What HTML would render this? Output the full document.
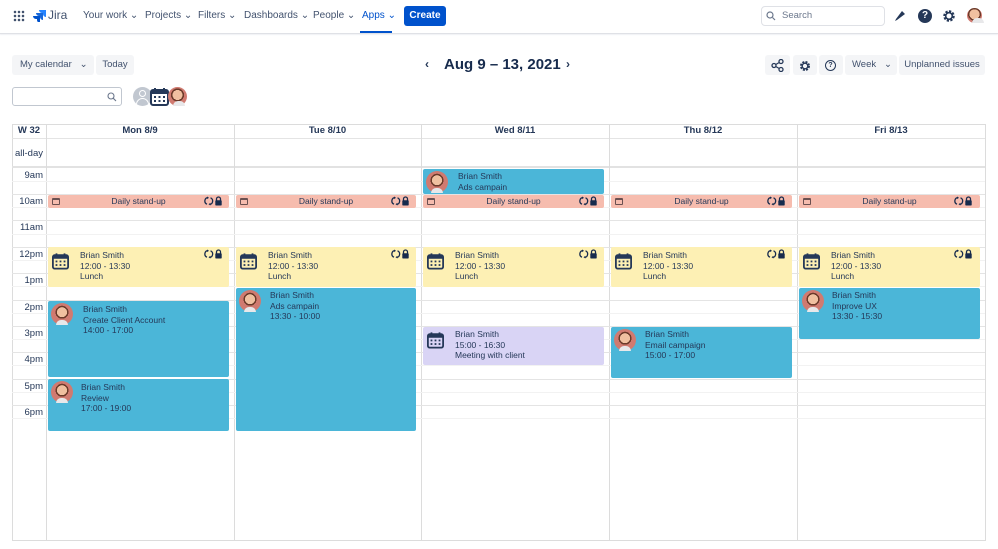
<!DOCTYPE html>
<html><head><meta charset="utf-8"><style>
*{box-sizing:border-box;margin:0;padding:0}
body{width:998px;height:549px;overflow:hidden;background:#fff;font-family:"Liberation Sans",sans-serif;color:#253858;position:relative}
.a{position:absolute}
.nav{font-size:10px;color:#42526e;top:10px}
.btn{position:absolute;background:#f4f5f7;border-radius:3px;font-size:9.5px;color:#42526e;height:20px;line-height:20px;text-align:center}
.hl{position:absolute;left:12px;width:973px;height:1px;background:#e4e4e4}
.hh{position:absolute;left:12px;width:973px;height:1px;background:#f2f2f2}
.vl{position:absolute;top:124px;height:417px;width:1px;background:#dcdcdc}
.tl{position:absolute;left:12px;width:31px;text-align:right;font-size:9.5px;color:#253858}
.ev{position:absolute;border-radius:2px;font-size:8.5px;color:#253858;line-height:10.5px}
.blue{background:#4bb6d8}.yel{background:#fdf0b4}.pink{background:#f6bcae}.lav{background:#d9d4f5}
.av{position:absolute;width:22px;height:22px;border-radius:50%;background:radial-gradient(circle at 50% 42%,#f0c0a0 0 5px,#6b3a2a 5px 6.5px,#d07a70 6.5px);}
.av::after{content:"";position:absolute;left:5px;bottom:0;width:12px;height:5px;border-radius:6px 6px 0 0;background:#e8e8ea}
.ic{position:absolute}
.dh{position:absolute;top:124px;font-size:9.5px;font-weight:bold;text-align:center;line-height:14px}
.sl{position:absolute;width:20px;height:10px}
</style></head><body>
<!-- top nav -->
<div class="a" style="left:13px;top:10px;width:12px;height:12px;background:
radial-gradient(circle,#42526e 1.2px,transparent 1.4px) 0 0/4px 4px"></div>
<svg class="a" style="left:33px;top:9px" width="13" height="13" viewBox="0 0 13 13"><path d="M12 1H6a3 3 0 0 0 3 3h1v1a3 3 0 0 0 3 3V1z" fill="#2684ff"/><path d="M9 4H3a3 3 0 0 0 3 3h1v1a3 3 0 0 0 3 3V4z" fill="#1868db"/><path d="M6 7H0a3 3 0 0 0 3 3h1v1a3 3 0 0 0 3 3V7z" fill="#0052cc"/></svg>
<div class="a" style="left:48px;top:8px;font-size:12px;color:#42526e">Jira</div>
<div class="a nav" style="left:83px">Your work ⌄</div>
<div class="a nav" style="left:145px">Projects ⌄</div>
<div class="a nav" style="left:198px">Filters ⌄</div>
<div class="a nav" style="left:244px">Dashboards ⌄</div>
<div class="a nav" style="left:313px">People ⌄</div>
<div class="a nav" style="left:362px;color:#0052cc">Apps ⌄</div>
<div class="a" style="left:360px;top:31px;width:32px;height:2px;background:#0052cc"></div>
<div class="a" style="left:404px;top:6px;width:42px;height:20px;background:#0052cc;border-radius:3px;color:#fff;font-size:10px;font-weight:bold;text-align:center;line-height:20px">Create</div>
<div class="a" style="left:761px;top:6px;width:124px;height:20px;border:1px solid #dfe1e6;border-radius:4px;font-size:9.5px;color:#6b778c;line-height:18px;padding-left:20px">Search</div>
<svg class="a" style="left:766px;top:11px" width="10" height="10"><circle cx="4" cy="4" r="3" stroke="#6b778c" fill="none" stroke-width="1.2"/><path d="M6.5 6.5L9 9" stroke="#6b778c" stroke-width="1.2"/></svg>
<svg class="a" style="left:893px;top:9px" width="14" height="14" viewBox="0 0 14 14"><path d="M3 10L9 2l3 3-8 6zM3 10l-1 2 2-1" fill="#253858"/></svg>
<div class="a" style="left:918px;top:9px;width:14px;height:14px;border-radius:50%;background:#253858;color:#fff;font-size:10px;font-weight:bold;text-align:center;line-height:14px">?</div>
<svg class="a" style="left:942px;top:9px" width="14" height="14" viewBox="0 0 14 14"><circle cx="7" cy="7" r="4.5" fill="none" stroke="#253858" stroke-width="2.5" stroke-dasharray="2.2 1.3"/><circle cx="7" cy="7" r="3.3" fill="none" stroke="#253858" stroke-width="1.6"/></svg>
<div class="av" style="left:967px;top:8px;width:15px;height:15px"></div>
<div class="a" style="left:0;top:33px;width:998px;height:1px;background:#dfe1e6;box-shadow:0 1px 1px #eceef2"></div>
<!-- toolbar -->
<div class="btn" style="left:12px;top:55px;width:82px;text-align:left;padding-left:8px">My calendar &nbsp;&nbsp;⌄</div>
<div class="btn" style="left:96px;top:55px;width:38px">Today</div>
<div class="a" style="left:425px;top:57px;font-size:12px;font-weight:bold">‹</div>
<div class="a" style="left:444px;top:56px;font-size:15px;font-weight:bold;color:#172b4d">Aug 9 – 13, 2021</div>
<div class="a" style="left:566px;top:57px;font-size:12px;font-weight:bold">›</div>
<div class="btn" style="left:765px;top:55px;width:25px"></div>
<svg class="a" style="left:771px;top:59px" width="13" height="13"><circle cx="3" cy="6.5" r="2" fill="none" stroke="#253858" stroke-width="1.3"/><circle cx="10" cy="2.5" r="2" fill="none" stroke="#253858" stroke-width="1.3"/><circle cx="10" cy="10.5" r="2" fill="none" stroke="#253858" stroke-width="1.3"/><path d="M4.8 5.5L8.2 3.5M4.8 7.5L8.2 9.5" stroke="#253858" stroke-width="1.2"/></svg>
<div class="btn" style="left:793px;top:55px;width:24px"></div>
<svg class="a" style="left:799px;top:60px" width="12" height="12"><circle cx="6" cy="6" r="4" fill="none" stroke="#253858" stroke-width="2" stroke-dasharray="2 1.2"/><circle cx="6" cy="6" r="2.8" fill="none" stroke="#253858" stroke-width="1.3"/></svg>
<div class="btn" style="left:819px;top:55px;width:24px"></div>
<div class="a" style="left:825px;top:60px;width:11px;height:11px;border:1.2px solid #253858;border-radius:50%;font-size:7px;text-align:center;line-height:9px;font-weight:bold">?</div>
<div class="btn" style="left:845px;top:55px;width:52px;text-align:left;padding-left:7px">Week &nbsp;&nbsp;⌄</div>
<div class="btn" style="left:899px;top:55px;width:86px">Unplanned issues</div>
<div class="a" style="left:12px;top:87px;width:110px;height:19px;border:1px solid #c1c7d0;border-radius:3px"></div>
<svg class="a" style="left:107px;top:92px" width="10" height="10"><circle cx="4" cy="4" r="3" stroke="#6b778c" fill="none" stroke-width="1.1"/><path d="M6.3 6.3L9 9" stroke="#6b778c" stroke-width="1.1"/></svg>
<div class="a" style="left:133px;top:87px;width:19px;height:19px;border-radius:50%;background:#c1c7d0;overflow:hidden"><div class="a" style="left:6px;top:3px;width:7px;height:7px;border-radius:50%;border:1.5px solid #fff"></div><div class="a" style="left:3px;top:11px;width:13px;height:10px;border-radius:7px 7px 0 0;border:1.5px solid #fff"></div></div>
<svg class="a" style="left:150px;top:87px" width="19" height="19" viewBox="0 0 19 19"><rect x="1" y="3" width="17" height="15" rx="2" fill="#fff" stroke="#253858" stroke-width="2"/><rect x="1" y="3" width="17" height="4" fill="#253858"/><path d="M5 1v4M14 1v4" stroke="#253858" stroke-width="2"/><g fill="#253858"><rect x="4" y="9" width="2" height="2"/><rect x="8.5" y="9" width="2" height="2"/><rect x="13" y="9" width="2" height="2"/><rect x="4" y="13" width="2" height="2"/><rect x="8.5" y="13" width="2" height="2"/><rect x="13" y="13" width="2" height="2"/></g></svg>
<div class="av" style="left:168px;top:87px;width:19px;height:19px"></div>
<!-- grid -->
<div class="a" style="left:12px;top:124px;width:974px;height:417px;border:1px solid #dcdcdc"></div>
<div class="hl" style="top:138px"></div>
<div class="a" style="left:12px;top:166px;width:973px;height:2px;background:#e2e2e2"></div>
<div class="vl" style="left:46px"></div><div class="vl" style="left:234px"></div><div class="vl" style="left:421px"></div><div class="vl" style="left:609px"></div><div class="vl" style="left:797px"></div>
<div class="dh" style="left:12px;width:34px">W 32</div>
<div class="dh" style="left:46px;width:188px">Mon 8/9</div>
<div class="dh" style="left:234px;width:187px">Tue 8/10</div>
<div class="dh" style="left:421px;width:188px">Wed 8/11</div>
<div class="dh" style="left:609px;width:188px">Thu 8/12</div>
<div class="dh" style="left:797px;width:188px">Fri 8/13</div>
<div class="tl" style="top:148px">all-day</div>
<div class="hh" style="top:181px"></div><div class="hl" style="top:194px"></div>
<div class="hh" style="top:207px"></div><div class="hl" style="top:220px"></div>
<div class="hh" style="top:234px"></div><div class="hl" style="top:247px"></div>
<div class="hh" style="top:260px"></div><div class="hl" style="top:273px"></div>
<div class="hh" style="top:286px"></div><div class="hl" style="top:300px"></div>
<div class="hh" style="top:313px"></div><div class="hl" style="top:326px"></div>
<div class="hh" style="top:339px"></div><div class="hl" style="top:352px"></div>
<div class="hh" style="top:365px"></div><div class="hl" style="top:379px"></div>
<div class="hh" style="top:392px"></div><div class="hl" style="top:405px"></div>
<div class="hh" style="top:418px"></div>
<div class="tl" style="top:170px">9am</div>
<div class="tl" style="top:196px">10am</div>
<div class="tl" style="top:222px">11am</div>
<div class="tl" style="top:249px">12pm</div>
<div class="tl" style="top:275px">1pm</div>
<div class="tl" style="top:302px">2pm</div>
<div class="tl" style="top:328px">3pm</div>
<div class="tl" style="top:354px">4pm</div>
<div class="tl" style="top:381px">5pm</div>
<div class="tl" style="top:407px">6pm</div>

<!-- stand-ups -->
<div class="ev pink" style="left:48px;top:195px;width:181px;height:13px;text-align:center;line-height:13px">Daily stand-up</div>
<div class="ev pink" style="left:236px;top:195px;width:180px;height:13px;text-align:center;line-height:13px">Daily stand-up</div>
<div class="ev pink" style="left:423px;top:195px;width:181px;height:13px;text-align:center;line-height:13px">Daily stand-up</div>
<div class="ev pink" style="left:611px;top:195px;width:181px;height:13px;text-align:center;line-height:13px">Daily stand-up</div>
<div class="ev pink" style="left:799px;top:195px;width:181px;height:13px;text-align:center;line-height:13px">Daily stand-up</div>
<div class="a" style="left:52px;top:198px;width:8px;height:7px;border:1px solid #6b5050;border-top-width:2px;border-radius:1px"></div>
<div class="a" style="left:240px;top:198px;width:8px;height:7px;border:1px solid #6b5050;border-top-width:2px;border-radius:1px"></div>
<div class="a" style="left:427px;top:198px;width:8px;height:7px;border:1px solid #6b5050;border-top-width:2px;border-radius:1px"></div>
<div class="a" style="left:615px;top:198px;width:8px;height:7px;border:1px solid #6b5050;border-top-width:2px;border-radius:1px"></div>
<div class="a" style="left:803px;top:198px;width:8px;height:7px;border:1px solid #6b5050;border-top-width:2px;border-radius:1px"></div>

<!-- sync/lock icons -->
<svg class="sl" style="left:204px;top:196px" viewBox="0 0 20 10"><path d="M4 1.5A3.5 3.5 0 0 0 3 8.2M5.5 8.5A3.5 3.5 0 0 0 6.5 1.8" fill="none" stroke="#172b4d" stroke-width="1.3"/><path d="M3 0.5l2 1.2-1.8 1.4zM6.5 9.5l-2-1.2 1.8-1.4z" fill="#172b4d"/><path d="M12.5 4.5V3a2 2 0 0 1 4 0v1.5" fill="none" stroke="#172b4d" stroke-width="1.3"/><rect x="11.3" y="4.3" width="6.4" height="5.2" rx="0.8" fill="#172b4d"/></svg>
<svg class="sl" style="left:391px;top:196px" viewBox="0 0 20 10"><path d="M4 1.5A3.5 3.5 0 0 0 3 8.2M5.5 8.5A3.5 3.5 0 0 0 6.5 1.8" fill="none" stroke="#172b4d" stroke-width="1.3"/><path d="M3 0.5l2 1.2-1.8 1.4zM6.5 9.5l-2-1.2 1.8-1.4z" fill="#172b4d"/><path d="M12.5 4.5V3a2 2 0 0 1 4 0v1.5" fill="none" stroke="#172b4d" stroke-width="1.3"/><rect x="11.3" y="4.3" width="6.4" height="5.2" rx="0.8" fill="#172b4d"/></svg>
<svg class="sl" style="left:579px;top:196px" viewBox="0 0 20 10"><path d="M4 1.5A3.5 3.5 0 0 0 3 8.2M5.5 8.5A3.5 3.5 0 0 0 6.5 1.8" fill="none" stroke="#172b4d" stroke-width="1.3"/><path d="M3 0.5l2 1.2-1.8 1.4zM6.5 9.5l-2-1.2 1.8-1.4z" fill="#172b4d"/><path d="M12.5 4.5V3a2 2 0 0 1 4 0v1.5" fill="none" stroke="#172b4d" stroke-width="1.3"/><rect x="11.3" y="4.3" width="6.4" height="5.2" rx="0.8" fill="#172b4d"/></svg>
<svg class="sl" style="left:767px;top:196px" viewBox="0 0 20 10"><path d="M4 1.5A3.5 3.5 0 0 0 3 8.2M5.5 8.5A3.5 3.5 0 0 0 6.5 1.8" fill="none" stroke="#172b4d" stroke-width="1.3"/><path d="M3 0.5l2 1.2-1.8 1.4zM6.5 9.5l-2-1.2 1.8-1.4z" fill="#172b4d"/><path d="M12.5 4.5V3a2 2 0 0 1 4 0v1.5" fill="none" stroke="#172b4d" stroke-width="1.3"/><rect x="11.3" y="4.3" width="6.4" height="5.2" rx="0.8" fill="#172b4d"/></svg>
<svg class="sl" style="left:954px;top:196px" viewBox="0 0 20 10"><path d="M4 1.5A3.5 3.5 0 0 0 3 8.2M5.5 8.5A3.5 3.5 0 0 0 6.5 1.8" fill="none" stroke="#172b4d" stroke-width="1.3"/><path d="M3 0.5l2 1.2-1.8 1.4zM6.5 9.5l-2-1.2 1.8-1.4z" fill="#172b4d"/><path d="M12.5 4.5V3a2 2 0 0 1 4 0v1.5" fill="none" stroke="#172b4d" stroke-width="1.3"/><rect x="11.3" y="4.3" width="6.4" height="5.2" rx="0.8" fill="#172b4d"/></svg>

<!-- lunches -->
<div class="ev yel" style="left:48px;top:247px;width:181px;height:40px;padding:3px 0 0 32px">Brian Smith<br>12:00 - 13:30<br>Lunch</div>
<div class="ev yel" style="left:236px;top:247px;width:180px;height:40px;padding:3px 0 0 32px">Brian Smith<br>12:00 - 13:30<br>Lunch</div>
<div class="ev yel" style="left:423px;top:247px;width:181px;height:40px;padding:3px 0 0 32px">Brian Smith<br>12:00 - 13:30<br>Lunch</div>
<div class="ev yel" style="left:611px;top:247px;width:181px;height:40px;padding:3px 0 0 32px">Brian Smith<br>12:00 - 13:30<br>Lunch</div>
<div class="ev yel" style="left:799px;top:247px;width:181px;height:40px;padding:3px 0 0 32px">Brian Smith<br>12:00 - 13:30<br>Lunch</div>
<svg class="sl" style="left:204px;top:249px" viewBox="0 0 20 10"><path d="M4 1.5A3.5 3.5 0 0 0 3 8.2M5.5 8.5A3.5 3.5 0 0 0 6.5 1.8" fill="none" stroke="#172b4d" stroke-width="1.3"/><path d="M3 0.5l2 1.2-1.8 1.4zM6.5 9.5l-2-1.2 1.8-1.4z" fill="#172b4d"/><path d="M12.5 4.5V3a2 2 0 0 1 4 0v1.5" fill="none" stroke="#172b4d" stroke-width="1.3"/><rect x="11.3" y="4.3" width="6.4" height="5.2" rx="0.8" fill="#172b4d"/></svg>
<svg class="sl" style="left:391px;top:249px" viewBox="0 0 20 10"><path d="M4 1.5A3.5 3.5 0 0 0 3 8.2M5.5 8.5A3.5 3.5 0 0 0 6.5 1.8" fill="none" stroke="#172b4d" stroke-width="1.3"/><path d="M3 0.5l2 1.2-1.8 1.4zM6.5 9.5l-2-1.2 1.8-1.4z" fill="#172b4d"/><path d="M12.5 4.5V3a2 2 0 0 1 4 0v1.5" fill="none" stroke="#172b4d" stroke-width="1.3"/><rect x="11.3" y="4.3" width="6.4" height="5.2" rx="0.8" fill="#172b4d"/></svg>
<svg class="sl" style="left:579px;top:249px" viewBox="0 0 20 10"><path d="M4 1.5A3.5 3.5 0 0 0 3 8.2M5.5 8.5A3.5 3.5 0 0 0 6.5 1.8" fill="none" stroke="#172b4d" stroke-width="1.3"/><path d="M3 0.5l2 1.2-1.8 1.4zM6.5 9.5l-2-1.2 1.8-1.4z" fill="#172b4d"/><path d="M12.5 4.5V3a2 2 0 0 1 4 0v1.5" fill="none" stroke="#172b4d" stroke-width="1.3"/><rect x="11.3" y="4.3" width="6.4" height="5.2" rx="0.8" fill="#172b4d"/></svg>
<svg class="sl" style="left:767px;top:249px" viewBox="0 0 20 10"><path d="M4 1.5A3.5 3.5 0 0 0 3 8.2M5.5 8.5A3.5 3.5 0 0 0 6.5 1.8" fill="none" stroke="#172b4d" stroke-width="1.3"/><path d="M3 0.5l2 1.2-1.8 1.4zM6.5 9.5l-2-1.2 1.8-1.4z" fill="#172b4d"/><path d="M12.5 4.5V3a2 2 0 0 1 4 0v1.5" fill="none" stroke="#172b4d" stroke-width="1.3"/><rect x="11.3" y="4.3" width="6.4" height="5.2" rx="0.8" fill="#172b4d"/></svg>
<svg class="sl" style="left:954px;top:249px" viewBox="0 0 20 10"><path d="M4 1.5A3.5 3.5 0 0 0 3 8.2M5.5 8.5A3.5 3.5 0 0 0 6.5 1.8" fill="none" stroke="#172b4d" stroke-width="1.3"/><path d="M3 0.5l2 1.2-1.8 1.4zM6.5 9.5l-2-1.2 1.8-1.4z" fill="#172b4d"/><path d="M12.5 4.5V3a2 2 0 0 1 4 0v1.5" fill="none" stroke="#172b4d" stroke-width="1.3"/><rect x="11.3" y="4.3" width="6.4" height="5.2" rx="0.8" fill="#172b4d"/></svg>

<!-- blue events -->
<div class="ev blue" style="left:423px;top:169px;width:181px;height:25px;padding:2px 0 0 35px;line-height:11px">Brian Smith<br>Ads campain</div>
<div class="av" style="left:426px;top:171px"></div>
<div class="ev blue" style="left:48px;top:301px;width:181px;height:76px;padding:3px 0 0 35px">Brian Smith<br>Create Client Account<br>14:00 - 17:00</div>
<div class="av" style="left:51px;top:303px"></div>
<div class="ev blue" style="left:48px;top:379px;width:181px;height:52px;padding:3px 0 0 33px">Brian Smith<br>Review<br>17:00 - 19:00</div>
<div class="av" style="left:51px;top:381px"></div>
<div class="ev blue" style="left:236px;top:288px;width:180px;height:143px;padding:2px 0 0 34px">Brian Smith<br>Ads campain<br>13:30 - 10:00</div>
<div class="av" style="left:239px;top:290px"></div>
<div class="ev lav" style="left:423px;top:327px;width:181px;height:38px;padding:2px 0 0 32px">Brian Smith<br>15:00 - 16:30<br>Meeting with client</div>
<div class="ev blue" style="left:611px;top:327px;width:181px;height:51px;padding:2px 0 0 34px">Brian Smith<br>Email campaign<br>15:00 - 17:00</div>
<div class="av" style="left:614px;top:329px"></div>
<div class="ev blue" style="left:799px;top:288px;width:181px;height:51px;padding:2px 0 0 33px">Brian Smith<br>Improve UX<br>13:30 - 15:30</div>
<div class="av" style="left:802px;top:290px"></div>

<!-- big calendar icons -->
<svg class="ic" style="left:52px;top:252px" width="17" height="18" viewBox="0 0 19 19"><rect x="1" y="3" width="17" height="15" rx="2" fill="none" stroke="#253858" stroke-width="2"/><rect x="1" y="3" width="17" height="4" fill="#253858"/><path d="M5 1v4M14 1v4" stroke="#253858" stroke-width="2"/><g fill="#253858"><rect x="4" y="9" width="2" height="2"/><rect x="8.5" y="9" width="2" height="2"/><rect x="13" y="9" width="2" height="2"/><rect x="4" y="13" width="2" height="2"/><rect x="8.5" y="13" width="2" height="2"/><rect x="13" y="13" width="2" height="2"/></g></svg>
<svg class="ic" style="left:240px;top:252px" width="17" height="18" viewBox="0 0 19 19"><rect x="1" y="3" width="17" height="15" rx="2" fill="none" stroke="#253858" stroke-width="2"/><rect x="1" y="3" width="17" height="4" fill="#253858"/><path d="M5 1v4M14 1v4" stroke="#253858" stroke-width="2"/><g fill="#253858"><rect x="4" y="9" width="2" height="2"/><rect x="8.5" y="9" width="2" height="2"/><rect x="13" y="9" width="2" height="2"/><rect x="4" y="13" width="2" height="2"/><rect x="8.5" y="13" width="2" height="2"/><rect x="13" y="13" width="2" height="2"/></g></svg>
<svg class="ic" style="left:427px;top:252px" width="17" height="18" viewBox="0 0 19 19"><rect x="1" y="3" width="17" height="15" rx="2" fill="none" stroke="#253858" stroke-width="2"/><rect x="1" y="3" width="17" height="4" fill="#253858"/><path d="M5 1v4M14 1v4" stroke="#253858" stroke-width="2"/><g fill="#253858"><rect x="4" y="9" width="2" height="2"/><rect x="8.5" y="9" width="2" height="2"/><rect x="13" y="9" width="2" height="2"/><rect x="4" y="13" width="2" height="2"/><rect x="8.5" y="13" width="2" height="2"/><rect x="13" y="13" width="2" height="2"/></g></svg>
<svg class="ic" style="left:615px;top:252px" width="17" height="18" viewBox="0 0 19 19"><rect x="1" y="3" width="17" height="15" rx="2" fill="none" stroke="#253858" stroke-width="2"/><rect x="1" y="3" width="17" height="4" fill="#253858"/><path d="M5 1v4M14 1v4" stroke="#253858" stroke-width="2"/><g fill="#253858"><rect x="4" y="9" width="2" height="2"/><rect x="8.5" y="9" width="2" height="2"/><rect x="13" y="9" width="2" height="2"/><rect x="4" y="13" width="2" height="2"/><rect x="8.5" y="13" width="2" height="2"/><rect x="13" y="13" width="2" height="2"/></g></svg>
<svg class="ic" style="left:803px;top:252px" width="17" height="18" viewBox="0 0 19 19"><rect x="1" y="3" width="17" height="15" rx="2" fill="none" stroke="#253858" stroke-width="2"/><rect x="1" y="3" width="17" height="4" fill="#253858"/><path d="M5 1v4M14 1v4" stroke="#253858" stroke-width="2"/><g fill="#253858"><rect x="4" y="9" width="2" height="2"/><rect x="8.5" y="9" width="2" height="2"/><rect x="13" y="9" width="2" height="2"/><rect x="4" y="13" width="2" height="2"/><rect x="8.5" y="13" width="2" height="2"/><rect x="13" y="13" width="2" height="2"/></g></svg>
<svg class="ic" style="left:427px;top:331px" width="17" height="18" viewBox="0 0 19 19"><rect x="1" y="3" width="17" height="15" rx="2" fill="none" stroke="#253858" stroke-width="2"/><rect x="1" y="3" width="17" height="4" fill="#253858"/><path d="M5 1v4M14 1v4" stroke="#253858" stroke-width="2"/><g fill="#253858"><rect x="4" y="9" width="2" height="2"/><rect x="8.5" y="9" width="2" height="2"/><rect x="13" y="9" width="2" height="2"/><rect x="4" y="13" width="2" height="2"/><rect x="8.5" y="13" width="2" height="2"/><rect x="13" y="13" width="2" height="2"/></g></svg>
</body></html>
